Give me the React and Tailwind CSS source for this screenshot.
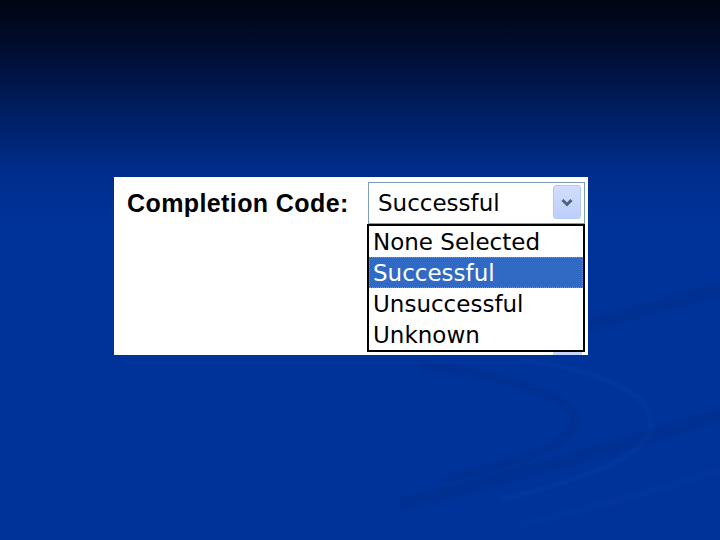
import React from "react";

const dejavu = { fontFamily: '"DejaVu Sans", Verdana, sans-serif' };

function Chevron() {
  return (
    <svg width="12" height="9" viewBox="0 0 12 9">
      <path d="M1.5 2 L6 6.5 L10.5 2" fill="none" stroke="#4d6185" strokeWidth="3" strokeLinejoin="miter" />
    </svg>
  );
}

function Swooshes() {
  return (
    <svg className="absolute inset-0 pointer-events-none" width="720" height="540" viewBox="0 0 720 540">
      <path d="M720 290 C 680 300, 630 312, 560 335" fill="none" stroke="#002a82" strokeOpacity="0.35" strokeWidth="14" strokeLinecap="round" />
      <path d="M420 365 C 500 375, 575 395, 575 420 C 575 445, 520 462, 440 480" fill="none" stroke="#002a82" strokeOpacity="0.3" strokeWidth="9" />
      <path d="M520 360 C 600 370, 660 395, 650 430 C 640 460, 580 480, 500 500" fill="none" stroke="#0a3ea6" strokeOpacity="0.25" strokeWidth="6" />
      <path d="M720 415 C 640 440, 540 470, 400 505" fill="none" stroke="#002a82" strokeOpacity="0.3" strokeWidth="14" />
      <path d="M720 470 C 660 490, 600 505, 520 525" fill="none" stroke="#0a3ea6" strokeOpacity="0.2" strokeWidth="8" />
    </svg>
  );
}

export default function App() {
  const items = ["None Selected", "Successful", "Unsuccessful", "Unknown"];
  return (
    <div className="relative w-[720px] h-[540px] overflow-hidden bg-[linear-gradient(to_bottom,#000511_0%,#000d30_9%,#002066_22%,#002d8c_32%,#00339a_42%,#00339a_100%)]">
      <Swooshes />
      <div className="relative pt-[177px] pl-[114px]">
        <div className="flex w-[474px] h-[178px] bg-white overflow-hidden">
          <div className="w-[253px] pl-[13px] pt-[11px]">
            <span
              className="text-[25px] leading-[30px] font-bold text-black tracking-[0.4px]"
              style={{ fontFamily: '"Liberation Sans", Arial, sans-serif' }}
            >
              Completion Code:
            </span>
          </div>
          <div className="w-[218px] pt-[5px] flex flex-col">
            <div className="ml-[1px] h-[42px] border border-[#7f9db9] bg-white flex items-start justify-between">
              <span className="pl-[9px] text-[23px] leading-[40px] text-black" style={dejavu}>
                Successful
              </span>
              <div className="mt-[2px] mr-[3px] w-[28px] h-[34px] rounded-[3px] border border-[#b6c9f5] bg-[linear-gradient(to_bottom,#d2defd,#bccffa)] flex items-center justify-center">
                <Chevron />
              </div>
            </div>
            <div className="border-2 border-black bg-white">
              {items.map((it, i) => (
                <div
                  key={it}
                  className={
                    i === 1
                      ? "h-[31px] pl-[3px] border border-dotted border-[#8b8b8b] bg-[#316ac5] text-white text-[23px] leading-[31px]"
                      : "h-[31px] pl-[4px] text-black text-[23px] leading-[33px]"
                  }
                  style={dejavu}
                >
                  {it}
                </div>
              ))}
            </div>
            <div className="flex justify-end">
              <div className="mr-[3px] w-[29px] h-[4px] bg-[#c6d6fb]" />
            </div>
          </div>
        </div>
      </div>
    </div>
  );
}
